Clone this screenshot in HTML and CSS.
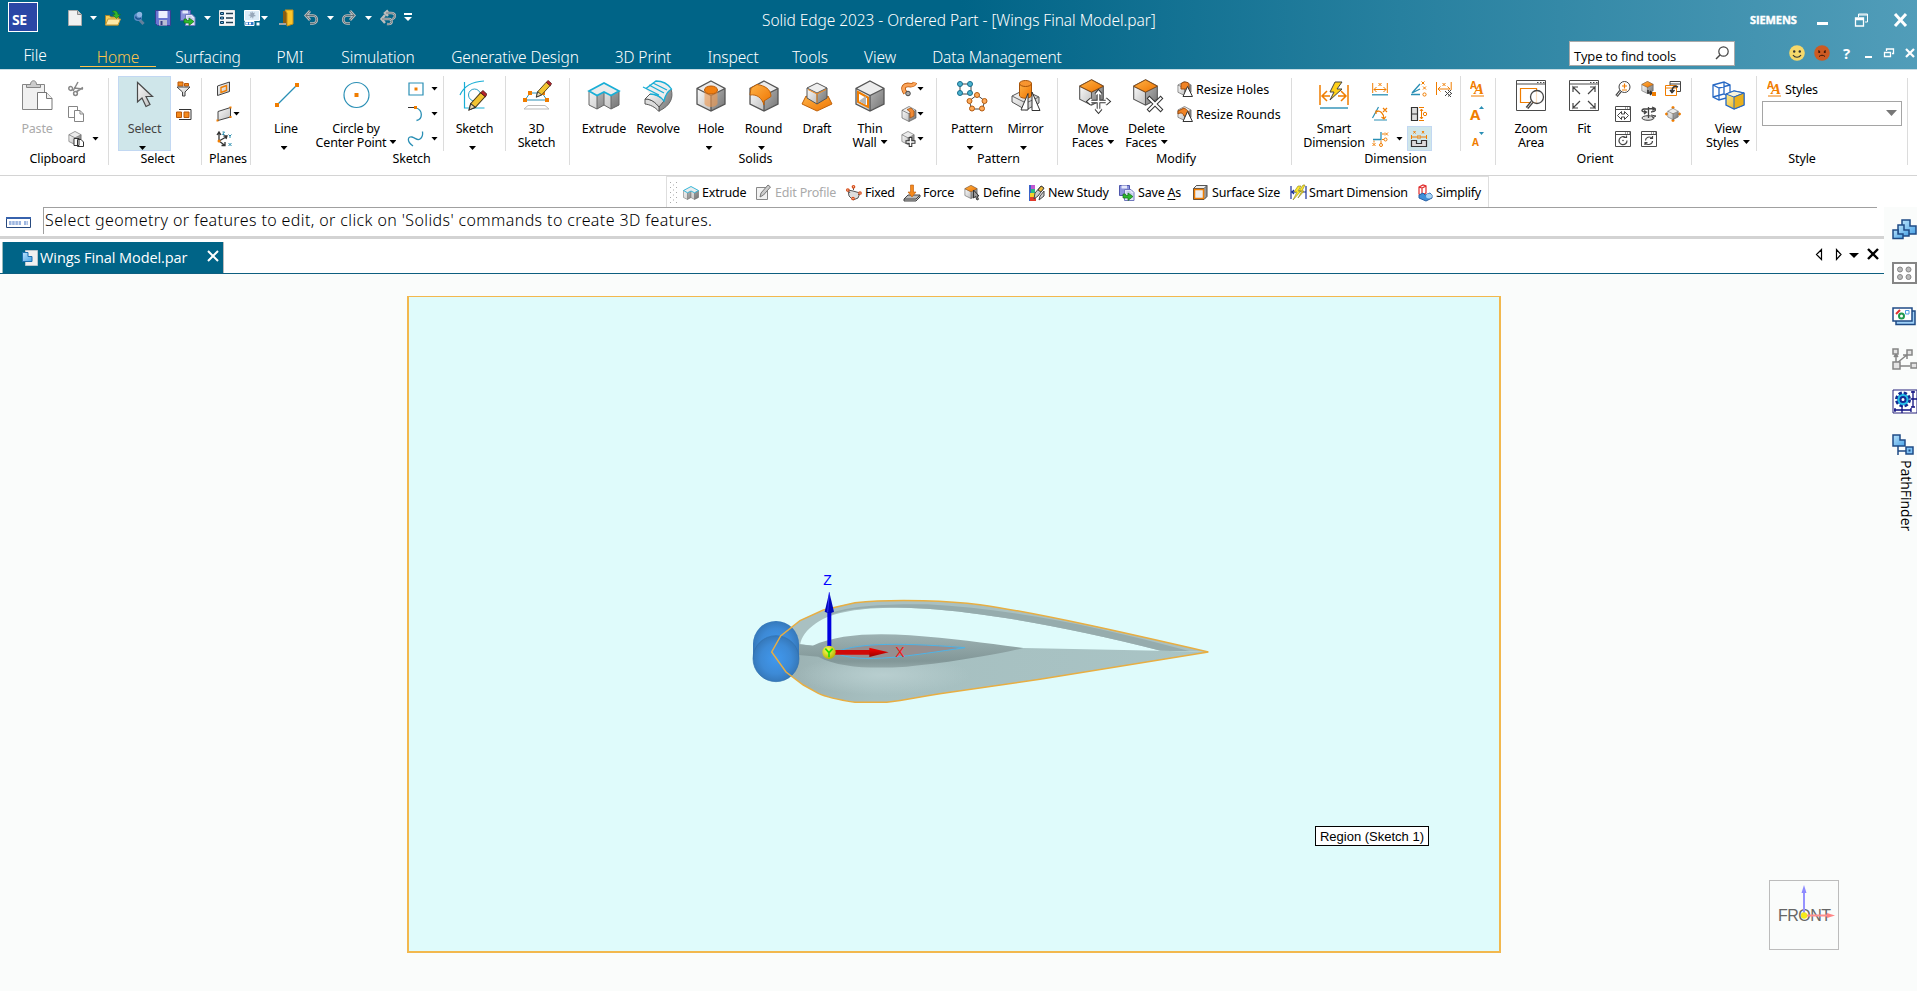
FILE: index.html
```html
<!DOCTYPE html>
<html lang="en">
<head>
<meta charset="utf-8">
<title>Solid Edge 2023 - Ordered Part - [Wings Final Model.par]</title>
<link rel="stylesheet" href="styles.css">
</head>
<body>
<svg class="defs" width="0" height="0">
  <defs>
    <linearGradient id="gOr" x1="0" y1="0" x2="1" y2="1"><stop offset="0" stop-color="#ffb347"/><stop offset="1" stop-color="#ee7300"/></linearGradient>
    <linearGradient id="gGr" x1="0" y1="0" x2="1" y2="1"><stop offset="0" stop-color="#fafafa"/><stop offset="1" stop-color="#c0c0c0"/></linearGradient>
    <linearGradient id="gDk" x1="0" y1="0" x2="1" y2="1"><stop offset="0" stop-color="#b4b4b4"/><stop offset="1" stop-color="#747474"/></linearGradient>
    <linearGradient id="gBl" x1="0" y1="0" x2="1" y2="1"><stop offset="0" stop-color="#b9e2fb"/><stop offset="1" stop-color="#4aa3e6"/></linearGradient>
    <linearGradient id="gYe" x1="0" y1="0" x2="1" y2="1"><stop offset="0" stop-color="#fff2a0"/><stop offset="1" stop-color="#e9a400"/></linearGradient>
    <symbol id="cube" viewBox="0 0 32 32">
      <path d="M2 8.500 16 15.500V31L2 24z" fill="url(#gGr)"/><path d="M30 8.500 16 15.500V31L30 24z" fill="url(#gDk)"/><path d="M16 1 30 8.500 16 15.500 2 8.500z" fill="#ececec"/>
      <path d="M16 1 30 8.500V24L16 31 2 24V8.500zM2 8.500 16 15.500 30 8.500M16 15.500V31" fill="none" stroke="#555" stroke-width="1.300"/>
    </symbol>
    <symbol id="cubeOr" viewBox="0 0 32 32">
      <use href="#cube"/><path d="M16 1 30 8.500 16 15.500 2 8.500z" fill="url(#gOr)" stroke="#8a4a10"/>
    </symbol>
    <symbol id="extrude" viewBox="0 0 32 32">
      <path d="M1 11 16 3l15 8v14l-8 4-7-4-7 4-8-4z" fill="url(#gGr)"/><path d="M9 15.500 16 12v13l-7 4zM23 15.500 31 11v14l-8 4z" fill="url(#gDk)"/>
      <path d="M1 11v14l8 4V15.500M31 11v14l-8 4V15.500M9 29l7-4 7 4M16 12v13" fill="none" stroke="#666"/>
      <path d="M1 11 16 3l15 8-8 4.500L16 12l-7 3.500z" fill="#ececec" stroke="#18aed6" stroke-width="1.700"/>
    </symbol>
    <symbol id="pencil" viewBox="0 0 18 20">
      <path d="m1 19 1.500-6L12 2.500l4.500 3.500L7 16.500z" fill="#f2c431" stroke="#4a3a18"/><path d="m1 19 1.500-6L7 16.500z" fill="#e8d8b0" stroke="#333"/><path d="m12 2.500 2.200-2L18 4l-1.500 2.500z" fill="#b8252c" stroke="#4a1515" stroke-width=".8"/>
    </symbol>
    <symbol id="win" viewBox="0 0 16 16"><path d="M.5.500h15v15H.5zM.5 3.500h15" fill="#fff" stroke="#4a4a4a"/><path d="M10 2h1M12 2h1M14 2h1" stroke="#4a4a4a"/></symbol>
    <symbol id="copies" viewBox="0 0 16 16">
      <path d="M.5.500h10v10H.5z" fill="#8b93dc" stroke="#4f57ad"/><path d="M2.500.500h5.500v3H2.500z" fill="#e6e9fb"/><path d="M5.500 4.500H12l3 3v8H5.500z" fill="#e4e8fb" stroke="#7178bd"/><path d="M7.500 7h4M7.500 9h6" stroke="#a5abd8"/>
      <path d="M4 9v4h5v2.500l5-4L9 8v2.500H6.500V9z" fill="#2db82d" stroke="#117017" stroke-width=".7"/>
    </symbol>
    <symbol id="aa" viewBox="0 0 15 16"><text x="0" y="8" class="ico-a">A</text><text x="4" y="13" class="ico-b">A</text><path d="M1 15h13" stroke="#f07d00"/></symbol>
  </defs>
</svg>

<header class="titlebar">
  <div class="title-row">
    <div class="logo">SE</div>
    <div class="quick">
      <svg class="q q-new" width="14" height="16" viewBox="0 0 14 16"><path d="M.5.500h9l4 4v11H.5z" fill="#f1f1f1" stroke="#aaa"/><path d="M9.500.500v4h4" fill="#ccc" stroke="#888"/></svg>
      <i class="caret light c-new"></i>
      <svg class="q q-open" width="16" height="16" viewBox="0 0 16 16"><path d="M.5 15V5.500h4l1 1.500h8v8z" fill="#f8cf5a" stroke="#a8842b"/><path d="m.5 15 2.500-6h12.500l-2.500 6z" fill="#ffe9a6" stroke="#c79a35"/><path d="M7 1.500c3-2 6 0 6 3h2.500L11.500 8.500 7.500 4.500H10c0-1.500-1-2.500-3-3z" fill="#35b32b" stroke="#147512" stroke-width=".5"/></svg>
      <svg class="q q-key" width="12" height="14" viewBox="0 0 12 14"><path d="m5 7 5.500 6" stroke="#63809c" stroke-width="3"/><circle cx="5" cy="6" r="4" fill="#5b8dc8"/><circle cx="6.500" cy="3.500" r="2.700" fill="#8db6e2"/><path d="M2.500 5.500C3 8 6 9 8 7" fill="none" stroke="#1c5590" stroke-width="1.500"/></svg>
      <svg class="q q-save" width="16" height="16" viewBox="0 0 16 16"><path d="M.5.500h15v15h-13l-2-2z" fill="#6a75d2" stroke="#373f92"/><path d="M3.500 1h9v7h-9z" fill="#edf0ff"/><path d="M4 10h8v5.500H4z" fill="#b9bdd5"/><path d="M5.500 11h2v4h-2z" fill="#353c83"/></svg>
      <svg class="q q-saveas" width="16" height="16"><use href="#copies"/></svg>
      <i class="caret light c-saveas"></i>
      <svg class="q q-list" width="16" height="16" viewBox="0 0 16 16"><path d="M.5.500h15v15H.5z" fill="#f4f7fa" stroke="#e7e7e7"/><path d="M1.500 2.500h3v2h-3zM1.500 7h3v2h-3zM1.500 11.500h3v2h-3z" fill="#6ab1df" stroke="#0a3a5c"/><path d="M7 3.500h7M7 8h7M7 12.500h7" stroke="#223f52" stroke-width="1.300"/></svg>
      <svg class="q q-style" width="16" height="16" viewBox="0 0 16 16"><path d="M.5.500h15v10H.5z" fill="#dcebf7" stroke="#fff"/><path d="m8 1 1 2 2-.5-1 2 2 1.500-2.500.5L9 9 8 7 6 8l.5-2L4 5l2.500-.5L6 2l1.500 1z" fill="#98a8ba"/><path d="M1 11.500h9v4H1z" fill="#3077c8" stroke="#fff"/><path d="M2 13.500h2M5 13.500h2" stroke="#fff" stroke-width="2"/><path d="M12.500 12.500h3v3h-3z" fill="#fff"/></svg>
      <i class="caret light c-style"></i>
      <svg class="q q-door" width="15" height="16" viewBox="0 0 15 16"><path d="M4 1h9v13H4z" fill="#8b5c10"/><path d="M6 0h8v14l-6 2V3z" fill="#fcc52a" stroke="#c89018"/><path d="M0 14h7" stroke="#a4a4a4" stroke-width="2"/></svg>
      <svg class="q q-undo" width="15" height="16" viewBox="0 0 15 16"><path d="M2 5.500h7c5 0 5 8 0 8H6M6 1 1.800 5.500 6 10" fill="none" stroke="#bdbdbd" stroke-width="2.700"/><path d="M2 5.500h7c5 0 5 8 0 8H6M6 1 1.800 5.500 6 10" fill="none" stroke="#4b5f68" stroke-width=".8"/></svg>
      <i class="caret light c-undo"></i>
      <svg class="q q-redo" width="15" height="16" viewBox="0 0 15 16"><path d="M13 5.500H6c-5 0-5 8 0 8h3M9 1l4.200 4.500L9 10" fill="none" stroke="#bdbdbd" stroke-width="2.700"/><path d="M13 5.500H6c-5 0-5 8 0 8h3M9 1l4.200 4.500L9 10" fill="none" stroke="#4b5f68" stroke-width=".8"/></svg>
      <i class="caret light c-redo"></i>
      <svg class="q q-multi" width="16" height="16" viewBox="0 0 16 16"><path d="M6 3h5c6 0 4 6 1 6M8 .5 5 3l3 3M2 9h7c4 0 4 6-2 5M5 5 1.500 9 5 13" fill="none" stroke="#bdbdbd" stroke-width="2.400"/><path d="M6 3h5c6 0 4 6 1 6M2 9h7c4 0 4 6-2 5" fill="none" stroke="#4b5f68" stroke-width=".7"/></svg>
      <div class="overflow"><i class="caret light wide"></i></div>
    </div>
    <div class="title">Solid Edge 2023 - Ordered Part - [Wings Final Model.par]</div>
    <div class="brand">SIEMENS</div>
    <svg class="sys s-min" width="12" height="14" viewBox="0 0 12 14"><path d="M0 10.500h11" stroke="#fff" stroke-width="3"/></svg>
    <svg class="sys s-res" width="13" height="14" viewBox="0 0 13 14"><path d="M3.500 4V1h9v8H10M3.500 2h9" fill="none" stroke="#fff"/><path d="M.5 5h8v8h-8zM.5 6.500h8" fill="none" stroke="#fff" stroke-width="1.300"/></svg>
    <svg class="sys s-x" width="13" height="14" viewBox="0 0 13 14"><path d="m1 1 11 12M12 1 1 13" stroke="#fff" stroke-width="3"/></svg>
  </div>
  <nav class="tab-row">
    <span class="tab t-file">File</span><span class="tab t-home">Home</span><span class="tab t-surf">Surfacing</span><span class="tab t-pmi">PMI</span><span class="tab t-sim">Simulation</span><span class="tab t-gen">Generative Design</span><span class="tab t-3d">3D Print</span><span class="tab t-insp">Inspect</span><span class="tab t-tools">Tools</span><span class="tab t-view">View</span><span class="tab t-data">Data Management</span>
    <div class="search"><span>Type to find tools</span><svg width="14" height="14" viewBox="0 0 14 14"><circle cx="8.500" cy="5.500" r="4.700" fill="none" stroke="#444" stroke-width="1.200"/><path d="m5 9-4 4" stroke="#444" stroke-width="1.400"/></svg></div>
    <svg class="face f1" width="16" height="16" viewBox="0 0 16 16"><circle cx="8" cy="8" r="7.800" fill="#f6d86a"/><circle cx="5.200" cy="6.500" r="1.200" fill="#333"/><circle cx="10.800" cy="6.500" r="1.200" fill="#333"/><path d="M4 10c2 3 6 3 8 0" fill="none" stroke="#333" stroke-width="1.200"/></svg>
    <svg class="face f2" width="16" height="16" viewBox="0 0 16 16"><circle cx="8" cy="8" r="7.800" fill="#cc5a22"/><path d="m4 5.500 2 .7M12 5.500l-2 .7" stroke="#3a1506" stroke-width=".7"/><circle cx="5.200" cy="7" r="1.100" fill="#3a1506"/><circle cx="10.800" cy="7" r="1.100" fill="#3a1506"/><path d="M5 11.500c2-1.700 4-1.700 6 0" fill="none" stroke="#3a1506"/></svg>
    <b class="help">?</b>
    <svg class="mini m1" width="8" height="10" viewBox="0 0 8 10"><path d="M0 9h7" stroke="#fff" stroke-width="2"/></svg>
    <svg class="mini m2" width="10" height="10" viewBox="0 0 10 10"><path d="M2.500 3V1h7v4.500H8M.5 4.500h6v4h-6z" fill="none" stroke="#fff" stroke-width="1.300"/></svg>
    <svg class="mini m3" width="10" height="10" viewBox="0 0 10 10"><path d="m1 1 8 8M9 1 1 9" stroke="#fff" stroke-width="2.200"/></svg>
  </nav>
</header>

<section class="ribbon">
  <div class="group g-clip">
    <div class="items">
      <div class="big b-paste disabled">
        <svg width="32" height="32" viewBox="0 0 32 32"><path d="M1.500 4.500h22v25h-22z" fill="#f0f0f0" stroke="#858585"/><path d="M5.500 7.500v-3h4c0-5 6-5 6 0h4v3z" fill="#ccc" stroke="#858585"/><path d="M16.500 12.500h9l5.500 6v11H16.500z" fill="#fff" stroke="#777"/><path d="M25.500 12.500v6H31" fill="#eee" stroke="#777"/></svg>
        <span>Paste</span>
      </div>
      <div class="col">
        <div class="row"><svg width="16" height="16" viewBox="0 0 16 16"><path d="M5 10 10 1M8 11 15 6.500M15 8 6 7" stroke="#888" stroke-width="1.500"/><circle cx="2.700" cy="7.500" r="1.900" fill="none" stroke="#888" stroke-width="1.500"/><circle cx="7.500" cy="12.500" r="1.900" fill="none" stroke="#888" stroke-width="1.500"/></svg></div>
        <div class="row"><svg width="16" height="16" viewBox="0 0 16 16"><path d="M.5.500h9v11h-9z" fill="#fff" stroke="#858585"/><path d="M6.500 4.500H12l3.500 3.500v7.500h-9z" fill="#fff" stroke="#858585"/><path d="M12 4.500V8h3.500" fill="none" stroke="#858585"/></svg></div>
        <div class="row"><svg width="16" height="16" viewBox="0 0 16 16"><use href="#cube" width="14" height="14"/><path d="M6 7.500h5v7H6zM9.500 8.500H13l2.500 2.500v4.500h-6z" fill="#fff" stroke="#333"/></svg><i class="caret gap8"></i></div>
      </div>
    </div>
    <div class="glabel l-clip">Clipboard</div>
  </div>

  <div class="group g-select">
    <div class="items">
      <div class="big b-select active">
        <svg width="32" height="32" viewBox="0 0 32 32"><path d="M8.500 2.500v19.500l4.500-4 4 8.500 4-2-4-8h6.500z" fill="url(#gGr)" stroke="#4a4a4a" stroke-width="1.200"/></svg>
        <span>Select</span><i class="caret under"></i>
      </div>
      <div class="col c-select">
        <div class="row"><svg width="16" height="16" viewBox="0 0 16 16"><path d="M2 1h5v4H2zM8.500 2.500h4V5h-4z" fill="#f28a1c" stroke="#b9570a"/><path d="M1 6h13L9 11v4H6.500v-4z" fill="url(#gGr)" stroke="#444"/></svg></div>
        <div class="row"><svg width="16" height="16" viewBox="0 0 16 16"><path d="M3 3.500h12v10H3" fill="#fff" stroke="#333"/><path d="M.5 6h5v5.500h-5zM8 6h5v5.500H8z" fill="#f58a1c" stroke="#b9570a"/></svg></div>
      </div>
    </div>
    <div class="glabel l-select">Select</div>
  </div>

  <div class="group g-planes">
    <div class="items">
      <div class="col c-planes">
        <div class="row"><svg width="16" height="16" viewBox="0 0 16 16"><path d="M1.500 5 13.500 1v9.500L1.500 14.500z" fill="url(#gGr)" stroke="#444"/><path d="M5 6.500 10.500 4.500v5L5 11.500z" fill="none" stroke="#f07d00" stroke-width="1.400"/></svg></div>
        <div class="row"><svg width="16" height="16" viewBox="0 0 16 16"><path d="M2 5.500 14.500 1.500v9.500L2 14.500z" fill="url(#gGr)" stroke="#444"/><path d="M13.500.500h2v2h-2zM13.500 10h2v2h-2zM.5 13.500h2v2h-2z" fill="#f07d00"/></svg><i class="caret gap1"></i></div>
        <div class="row"><svg width="16" height="16" viewBox="0 0 16 16"><path d="M3 10V1.500M1 4l2-3 2 3M3 10l8-4.500M7.500 5H11l-1 3M3 10l6 4.500M9 11v3.500H5.500" fill="none" stroke="#333" stroke-width="1.300"/><circle cx="3" cy="10" r="1.500" fill="#f07d00"/><path d="M6.500 1h2l-2 2.500h2M12.500 3.500 14 5l1.500-1.500M14 5v2M12.500 12l3 3M15.500 12l-3 3" fill="none" stroke="#258bad"/></svg></div>
      </div>
    </div>
    <div class="glabel l-planes">Planes</div>
  </div>

  <div class="group g-sketch">
    <div class="items">
      <div class="big b-line"><svg width="32" height="32" viewBox="0 0 32 32"><path d="M7 25 27 5" stroke="#2a8fb5" stroke-width="1.300"/><path d="M5 23h4v4H5zM25 3h4v4h-4z" fill="#f07d00"/></svg><span>Line</span><i class="caret under"></i></div>
      <div class="big b-circle"><svg width="32" height="32" viewBox="0 0 32 32"><circle cx="16.500" cy="15" r="12.500" fill="none" stroke="#2a8fb5" stroke-width="1.200"/><path d="M14.500 13h4v4h-4z" fill="#f07d00"/></svg><span>Circle by<br>Center Point<i class="caret in"></i></span></div>
      <div class="col c-shapes">
        <div class="row"><svg width="16" height="16" viewBox="0 0 16 16"><path d="M1 2h14v12H1z" fill="none" stroke="#2a8fb5" stroke-width="1.200"/><path d="M6.500 6.500h3v3h-3z" fill="#f07d00"/></svg><i class="caret gap7"></i></div>
        <div class="row"><svg width="16" height="16" viewBox="0 0 16 16"><path d="M0 1.500h7" stroke="#333"/><path d="M8 2c7 2 7 11 .5 12.500" fill="none" stroke="#2a8fb5" stroke-width="1.300"/><path d="M6 0h3v3H6z" fill="#f07d00"/></svg><i class="caret gap7"></i></div>
        <div class="row"><svg width="16" height="16" viewBox="0 0 16 16"><path d="M5 15C-2 10 0 5 4 6s5 4 8 2 3-4 2.500-7.500" fill="none" stroke="#2a8fb5" stroke-width="1.300"/></svg><i class="caret gap7"></i></div>
      </div>
      <div class="vsep"></div>
      <div class="big b-sk"><svg width="32" height="32" viewBox="0 0 32 32"><path d="M5.500 2v26h20M1 15C5 6 14 1.500 25 1" fill="none" stroke="#18aed6" stroke-width="1.200"/><circle cx="15.500" cy="15" r="6" fill="none" stroke="#2a9fc5"/><use href="#pencil" x="9" y="10" width="19" height="21"/></svg><span>Sketch</span><i class="caret under"></i></div>
      <div class="vsep"></div>
      <div class="big b-3d"><svg width="32" height="32" viewBox="0 0 32 32"><path d="M4 20 9 13h12l5 7z" fill="none" stroke="#2a8fb5"/><path d="M7 25.500h17l4 3.500H3z" fill="#fff" stroke="#bbb"/><path d="M2 18h4v4H2zM24 18h4v4h-4zM7 11h4v4H7zM20 11h4v4h-4z" fill="#f07d00"/><use href="#pencil" x="14" y="0" width="17" height="18"/></svg><span>3D<br>Sketch</span></div>
    </div>
    <div class="glabel l-sketch">Sketch</div>
  </div>

  <div class="group g-solids">
    <div class="items">
      <div class="big b-ext"><svg width="34" height="32"><use href="#extrude" width="34" height="32"/></svg><span>Extrude</span></div>
      <div class="big b-rev"><svg width="32" height="32" viewBox="0 0 32 32"><path d="M29 9c3 9-1 17-12 22v-4l4-12z" fill="url(#gDk)" stroke="#666"/><path d="M3 19c6 0 10 3 14 8v4.500C13 27 8 24.500 3 24z" fill="#ddd" stroke="#555"/><path d="M3 19 8 14c6 0 11 3 14 7l-5 6c-4-5-8-8-14-8z" fill="url(#gGr)" stroke="#555"/><path d="M8 14 3.500 8.500 14 1c6 0 12 3 15.500 8-5 3-6.500 7-7.500 12-3-4-8-7-14-7z" fill="#eee"/><path d="M4 8.500 14 1c6 0 12 3 15.500 8-5 3-6.500 7-7.500 12-3-4-8-7-14-7M1 7l16 8M7 5l15 8M11 3l14 7" fill="none" stroke="#18aed6" stroke-width="1.300"/></svg><span>Revolve</span></div>
      <div class="big b-hole"><svg width="32" height="32"><use href="#cube" width="32" height="32"/><path d="M9.500 10v14c2 4 11 4 13 0V10z" fill="#f29a4e" opacity=".6"/><ellipse cx="16" cy="10" rx="6.500" ry="4" fill="#f28011" stroke="#bb5a08"/></svg><span>Hole</span><i class="caret under"></i></div>
      <div class="big b-round"><svg width="32" height="32"><use href="#cube" width="32" height="32"/><path d="m2 15 1-7 6-3.500c8 1 14 5 14 12L16 21v4C14 18 9 14 2 15z" fill="url(#gOr)" stroke="#c0620a"/></svg><span>Round</span><i class="caret under"></i></div>
      <div class="big b-draft"><svg width="32" height="32" viewBox="0 0 32 32"><path d="m5 16-4 8 15 7 15-7-4-8-11 7z" fill="url(#gOr)" stroke="#c0620a"/><path d="m6 8 10 5v11L6 18z" fill="url(#gGr)"/><path d="m26 8-10 5v11l10-6z" fill="url(#gDk)"/><path d="m16 3 10 5-10 5L6 8z" fill="#eee"/><path d="m16 3 10 5v10l-10 6-10-6V8zM6 8l10 5 10-5M16 13v11" fill="none" stroke="#555"/><path d="M7 9.500 16 14l9-4.500M16 14v9" fill="none" stroke="#f28a1c"/></svg><span>Draft</span></div>
      <div class="big b-thin"><svg width="32" height="32"><use href="#cube" width="32" height="32"/><path d="m4 12 10 5.500V27L4 22z" fill="#fff" stroke="#f07d00" stroke-width="2"/><path d="m5 21 7-5v9z" fill="#b5b5b5"/></svg><span>Thin<br>Wall <i class="caret in"></i></span></div>
      <div class="col c-solids">
        <div class="row"><svg width="16" height="16" viewBox="0 0 16 16"><path d="M4.500 12C0 6 4 3.500 8 4s5 0 6-2.500" fill="none" stroke="#b9570a" stroke-width="4.600"/><path d="M4.500 12C0 6 4 3.500 8 4s5 0 6-2.500" fill="none" stroke="#fba45a" stroke-width="3"/><circle cx="7" cy="12.500" r="2.300" fill="#aaa" stroke="#444"/></svg><i class="caret"></i></div>
        <div class="row"><svg width="16" height="16"><use href="#cube" width="16" height="16"/><path d="M6 3.500 10 2l3 3v5l-4 2V6z" fill="#f08a35" stroke="#9a4c10" stroke-width=".7"/></svg><i class="caret"></i></div>
        <div class="row"><svg width="16" height="16"><use href="#cube" width="14" height="14"/><path d="M9.500 6v10M4.500 11h10" stroke="#333" stroke-width="3.600"/><path d="M9.500 7v8M5.500 11h8" stroke="#fff" stroke-width="1.500"/></svg><i class="caret"></i></div>
      </div>
    </div>
    <div class="glabel l-solids">Solids</div>
  </div>

  <div class="group g-pattern">
    <div class="items">
      <div class="big b-pat"><svg width="32" height="32" viewBox="0 0 32 32"><path d="M4 4h11v10H4z" fill="none" stroke="#444"/><path d="m21 15 8 6-3 8H16l-3-8z" fill="none" stroke="#444"/><g fill="#4bb3d0" stroke="#176c8b"><circle cx="4" cy="4" r="2.500"/><circle cx="14" cy="4" r="2.500"/><circle cx="4" cy="13" r="2.500"/><circle cx="14" cy="13" r="2.500"/></g><g fill="#ffab5a" stroke="#b35a10"><circle cx="21" cy="15" r="2.500"/><circle cx="28.500" cy="21" r="2.500"/><circle cx="26" cy="28.500" r="2.500"/><circle cx="16" cy="28.500" r="2.500"/><circle cx="13.500" cy="21" r="2.500"/></g></svg><span>Pattern</span><i class="caret under"></i></div>
      <div class="big b-mir"><svg width="32" height="32" viewBox="0 0 32 32"><path d="m2 16 12-6 15 7v6l-13 7-14-8z" fill="url(#gGr)" stroke="#555"/><path d="m2 16 14 7 13-6" fill="none" stroke="#666"/><path d="M9.500 3v13c2 3 10 3 12 0V3z" fill="url(#gOr)" stroke="#a65309"/><ellipse cx="15.500" cy="3.500" rx="6" ry="3" fill="#f79530" stroke="#a65309"/><path d="M18 13.500V30h-7zM22 12v18.500h8z" fill="#fff" stroke="#333"/></svg><span>Mirror</span><i class="caret under"></i></div>
    </div>
    <div class="glabel l-pattern">Pattern</div>
  </div>

  <div class="group g-modify">
    <div class="items">
      <div class="big b-move"><svg width="34" height="32"><use href="#cubeOr" x="1" y="-1" width="29" height="27"/><path d="M22.500 12v19M13 21.500h19M20 14.500l2.500-3 2.500 3M20 28.500l2.500 3 2.500-3M15.500 19l-3 2.500 3 2.500M29.500 19l3 2.500-3 2.500" fill="none" stroke="#333" stroke-width="3.600"/><path d="M22.500 12v19M13 21.500h19M20 14.500l2.500-3 2.500 3M20 28.500l2.500 3 2.500-3M15.500 19l-3 2.500 3 2.500M29.500 19l3 2.500-3 2.500" fill="none" stroke="#fff" stroke-width="1.700"/></svg><span>Move<br>Faces <i class="caret in"></i></span></div>
      <div class="big b-del"><svg width="34" height="32"><use href="#cubeOr" x="1" y="-1" width="29" height="27"/><path d="m18 17 14 14M32 17 18 31" stroke="#333" stroke-width="4"/><path d="m18.700 17.700 12.600 12.600M31.300 17.700 18.700 30.300" stroke="#fff" stroke-width="2"/></svg><span>Delete<br>Faces <i class="caret in"></i></span></div>
      <div class="col c-modify">
        <div class="row"><svg width="16" height="16"><use href="#cube" width="15" height="15"/><path d="M4 3c2-3 8-2 8 0v5H4z" fill="#f08325" stroke="#9a4c10"/><path d="M10.500 5.500 6 15.500h9.500z" fill="#fff" stroke="#333"/></svg><span>Resize Holes</span></div>
        <div class="row"><svg width="16" height="16"><use href="#cube" width="15" height="15"/><path d="m1 5 6-3c4 2 6 5 5 9l-5-1C6 7 4 6 1 8z" fill="#f08325" stroke="#9a4c10"/><path d="M10.500 5.500 6 15.500h9.500z" fill="#fff" stroke="#333"/></svg><span>Resize Rounds</span></div>
      </div>
    </div>
    <div class="glabel l-modify">Modify</div>
  </div>

  <div class="group g-dim">
    <div class="items">
      <div class="big b-smart"><svg width="32" height="32" viewBox="0 0 32 32"><path d="M2 5v20M30 5v20M4 16h8M20 16h8M9 11l-5 5 5 5M23 11l5 5-5 5" fill="none" stroke="#f07d00" stroke-width="1.500"/><path d="M2 28h28" stroke="#2a8fb5" stroke-width="1.400"/><path d="m17 2-5 10h4l-4 8 12-11h-5l5-7z" fill="#ffd11a" stroke="#444"/></svg><span>Smart<br>Dimension</span></div>
      <div class="col c-d1">
        <div class="row"><svg width="16" height="16" viewBox="0 0 16 16"><path d="M.7 2v10M15.300 2v10M2 8.500h12M4.500 6 2 8.500 4.500 11M11.500 6 14 8.500 11.500 11M6.500 2l3 3M9.500 2l-3 3" fill="none" stroke="#f07d00"/><path d="M0 13.800h16" stroke="#2a8fb5" stroke-width="1.300"/></svg></div>
        <div class="row"><svg width="16" height="16" viewBox="0 0 16 16"><path d="m.5 12 6-11M2 14h13" fill="none" stroke="#2a8fb5" stroke-width="1.200"/><path d="M4 6c4-3 8 2 8 7M9.500 11l2.500 2 2-2.500M4 8V5h3M11 2l4 4M15 2l-4 4" fill="none" stroke="#f07d00" stroke-width="1.200"/></svg></div>
        <div class="row"><svg width="16" height="16" viewBox="0 0 16 16"><path d="M1 8.500h8V1" fill="none" stroke="#2a8fb5" stroke-width="1.300"/><path d="M10 3h3M10 8.500h2M13 1.500l3 3M16 1.500l-3 3M.5 12l3 3M3.500 12l-3 3M2 9.500v2M9 9.500v3" fill="none" stroke="#f07d00"/><circle cx="13.500" cy="8.500" r="1.500" fill="none" stroke="#f07d00"/><circle cx="9" cy="14" r="1.500" fill="none" stroke="#f07d00"/></svg><i class="caret gap8"></i></div>
      </div>
      <div class="col c-d2">
        <div class="row"><svg width="16" height="16" viewBox="0 0 16 16"><path d="M1 12 9 3M1 12l8-4M0 13.500h9" fill="none" stroke="#2a8fb5" stroke-width="1.300"/><path d="m10.500.5 3 3M13.500.5l-3 3M12 5.500l3 3M15 5.500l-3 3" stroke="#f07d00"/><circle cx="13.500" cy="13.500" r="1.600" fill="none" stroke="#f07d00"/></svg></div>
        <div class="row"><svg width="16" height="16" viewBox="0 0 16 16"><path d="M.5 1.500h6v13h-6zM.5 8h6" fill="#ddd" stroke="#333" stroke-width="1.200"/><path d="M8 1.500h5M8 14.500h5M10.500 3v10M9 5l1.500-2L12 5M9 11l1.500 2 1.500-2" fill="none" stroke="#f07d00"/><circle cx="14" cy="8" r="1.700" fill="none" stroke="#f07d00"/></svg></div>
        <div class="row hl"><svg width="16" height="16" viewBox="0 0 16 16"><path d="M.5 4v4M7 4v4M9 4v4M15.500 4v4M.5 6H7M9 6h6.500M2.500 0l2 2.500M4.500 0l-2 2.500M11 0l2 2.500M13 0l-2 2.500" stroke="#f07d00" fill="none"/><path d="M.5 9.500h5v3h5v-3h5v6H.5z" fill="#ddd" stroke="#333" stroke-width="1.200"/></svg></div>
      </div>
      <div class="col c-d3">
        <div class="row"><svg width="16" height="16" viewBox="0 0 16 16"><path d="M.5 1v13M15.200 1v8M2 8h12M4.500 5.500 2 8l2.500 2.500M11.500 5.500 14 8M6.500 2l3 3M9.500 2l-3 3" fill="none" stroke="#f07d00"/><path d="m9 10 6 6M12 9l4 4M15 9l-6 6M12 15.500l4-3.500" stroke="#444"/></svg></div>
      </div>
      <div class="vsep"></div>
      <div class="col c-d4">
        <div class="row"><svg width="15" height="16"><use href="#aa"/></svg></div>
        <div class="row"><svg width="15" height="16" viewBox="0 0 15 16"><text x="0" y="14" class="ico-c">A</text><path d="m9 3 2.500-3L14 3z" fill="#2a8fb5"/></svg></div>
        <div class="row"><svg width="15" height="16" viewBox="0 0 15 16"><text x="2" y="15" class="ico-d">A</text><path d="m9 1 2.500 3L14 1z" fill="#2a8fb5"/></svg></div>
      </div>
    </div>
    <div class="glabel l-dim">Dimension</div>
  </div>

  <div class="group g-orient">
    <div class="items">
      <div class="big b-zoom"><svg width="32" height="32" viewBox="0 0 32 32"><path d="M1.500.500h29v30h-29zM1.500 4h29" fill="#fff" stroke="#4a4a4a"/><path d="M22 2.500h1.500M25 2.500h1.500M28 2.500h1.500" stroke="#4a4a4a"/><path d="M5.500 8.500h16v14h-16z" fill="none" stroke="#f07d00" stroke-width="1.200"/><circle cx="22" cy="17" r="6.500" fill="#fff" fill-opacity=".75" stroke="#444" stroke-width="1.300"/><path d="m17 22-5 6" stroke="#444" stroke-width="3.500"/><path d="m17 22-4.500 5.500" stroke="#ddd"/></svg><span>Zoom<br>Area</span></div>
      <div class="big b-fit"><svg width="32" height="32" viewBox="0 0 32 32"><path d="M1.500.500h29v30h-29zM1.500 4h29" fill="#fff" stroke="#4a4a4a"/><path d="M22 2.500h1.500M25 2.500h1.500M28 2.500h1.500" stroke="#4a4a4a"/><path d="m12 14-7-7v5M5 7h5M20 14l7-7v5M27 7h-5M12 21l-7 7v-5M5 28h5M20 21l7 7v-5M27 28h-5" fill="none" stroke="#444" stroke-width="1.200"/></svg><span>Fit</span></div>
      <div class="col c-o1">
        <div class="row"><svg width="16" height="16" viewBox="0 0 16 16"><circle cx="9.500" cy="6" r="5.500" fill="#fff" stroke="#444"/><path d="m5.500 10-4 5" stroke="#444" stroke-width="3"/><path d="m5.500 10-3.500 4.500" stroke="#eee"/><path d="M7 5h5M9.500 2.500v5M7 9h5" stroke="#f07d00" stroke-width="1.200"/></svg></div>
        <div class="row"><svg width="16" height="16" viewBox="0 0 16 16"><use href="#win"/><path d="M6.500 5.500 2.500 9.500l4 4V11h3v2.500l4-4-4-4V8h-3z" fill="none" stroke="#444"/></svg></div>
        <div class="row"><svg width="16" height="16" viewBox="0 0 16 16"><use href="#win"/><path d="M10.500 6.500a4 4 0 1 0 1.500 3M8.500 6.500h3V4.500" fill="none" stroke="#444" stroke-width="1.200"/><circle cx="8" cy="9.500" r=".8" fill="#444"/></svg></div>
      </div>
      <div class="col c-o2">
        <div class="row"><svg width="16" height="16"><use href="#cubeOr" width="13" height="13"/><path d="M7 9v3h4M9 10l2 2-2 2" fill="none" stroke="#333" stroke-width="1.500"/><path d="M11 11h4v4h-4z" fill="#f07d00"/></svg></div>
        <div class="row"><svg width="16" height="16" viewBox="0 0 16 16"><ellipse cx="7" cy="12" rx="6" ry="2.300" fill="#ddd" stroke="#444"/><path d="M7.500 1v11M5 6C0 6 0 3.500 3 3l9-.5c4 .5 3 3-2 3.500M3 4.500 5.500 6 3 8M11 1l3 1.500-2.500 2" fill="none" stroke="#444" stroke-width="1.300"/><path d="m10 9 5 1-4 2" fill="none" stroke="#444"/></svg></div>
        <div class="row"><svg width="16" height="16" viewBox="0 0 16 16"><use href="#win"/><path d="M11.500 7.500c-3-3-7-1-7 2M4 12c3 3 7.500 1 7.500-2M11.500 5v2.500H9M4 14v-2.500h2.500" fill="none" stroke="#444" stroke-width="1.200"/></svg></div>
      </div>
      <div class="col c-o3">
        <div class="row"><svg width="16" height="16" viewBox="0 0 16 16"><path d="M5 .5h10.500v10H5zM5 3h10" fill="#fff" stroke="#444"/><path d="M.5 4.500h11v10H.5zM.5 7h11" fill="#fff" stroke="#f07d00"/><path d="M13 6c-4-2-6 1-6 4M5 9l2 2.500L9.500 9" fill="none" stroke="#333" stroke-width="1.600"/></svg></div>
        <div class="row"><svg width="16" height="16" viewBox="0 0 16 16"><path d="M8 0v16M0 8h16M6.500 1.500h3M6.500 14.500h3M1.500 6.500v3M14.500 6.500v3" stroke="#f07d00" stroke-width="1.300"/><use href="#cube" x="2" y="2" width="12" height="12"/></svg></div>
      </div>
    </div>
    <div class="glabel l-orient">Orient</div>
  </div>

  <div class="group g-style">
    <div class="items">
      <div class="big b-vs"><svg width="34" height="32" viewBox="0 0 34 32"><path d="M2 5 13 2l6 3v12L8 20l-6-3zM2 5l6 3 11-3M8 8v12M13 2v12L2 17M13 14l6 3" fill="none" stroke="#2668c4" stroke-width="1.300"/><path d="m15 14 8-3 10 2v12l-10 4-8-4z" fill="url(#gYe)" stroke="#2668c4" stroke-width="1.300"/><path d="m15 14 8 3 10-4-10-2z" fill="#f8f4dc" stroke="#2668c4"/><path d="M23 17v12l10-4V13z" fill="#eab01c" stroke="#2668c4"/></svg><span>View<br>Styles <i class="caret in"></i></span></div>
      <div class="vsep"></div>
      <div class="style-box">
        <div class="style-head"><svg width="15" height="16"><use href="#aa"/></svg><span>Styles</span></div>
        <div class="combo"><i></i></div>
      </div>
    </div>
    <div class="glabel l-style">Style</div>
  </div>
</section>

<div class="quickbar-row">
  <div class="quickbar">
    <svg class="grip" width="7" height="24" viewBox="0 0 7 24"><path d="M1 1v22M7 1v22" stroke="#aaa" stroke-dasharray="1 4" transform="translate(-.5 0)"/><path d="M3.500 3.500v20" stroke="#aaa" stroke-dasharray="1 4"/></svg>
    <div class="cmd k1"><svg width="16" height="16"><use href="#extrude" width="16" height="16"/></svg>Extrude</div>
    <div class="cmd k2 disabled"><svg width="16" height="16" viewBox="0 0 16 16"><path d="M.5 2.500h11v12H.5z" fill="#f2f2f2" stroke="#888"/><path d="m4 12 1-4 7-8 2.500 2L7.500 10z" fill="#ccc" stroke="#777"/></svg>Edit Profile</div>
    <div class="cmd k3"><svg width="16" height="16" viewBox="0 0 16 16"><path d="m2 5 5 1 7 2-2 5-5 2-4-4z" fill="#ddd" stroke="#555"/><path d="M7.500 2v3M2 5l2 3M14 8l-2 2M7 12v2" stroke="#555"/><g fill="#fff" stroke="#d9501c" stroke-width="1.300"><circle cx="7.500" cy="1.800" r="1.200"/><circle cx="1.800" cy="5" r="1.200"/><circle cx="14" cy="8" r="1.200"/><circle cx="7" cy="13.500" r="1.200"/></g></svg>Fixed</div>
    <div class="cmd k4"><svg width="16" height="16" viewBox="0 0 16 16"><path d="m4 10-4 4v2h12l4-4v-2z" fill="#bbb" stroke="#444"/><path d="M0 14h12l4-4" fill="none" stroke="#444"/><path d="M6.500 0h3v7H12l-4 5-4-5h2.500z" fill="#f58a1c" stroke="#b9570a" stroke-width=".6"/></svg>Force</div>
    <div class="cmd k5"><svg width="16" height="16"><use href="#cubeOr" width="14" height="14"/><path d="M9.500 5v8l2-1.500 1.500 3.500 1.500-.7-1.500-3.300H15z" fill="#999" stroke="#333"/></svg>Define</div>
    <div class="cmd k6"><svg width="16" height="16" viewBox="0 0 16 16"><path d="M0 0h3v16H0z" fill="#3a62c8"/><path d="M2 0h4v5H2z" fill="#c05ad0"/><path d="M2 4h4v4H2z" fill="#27b884"/><path d="M1 8h5v4H1z" fill="#f2d32b"/><path d="M1 12h6v4H1z" fill="#e23b2c"/><path d="m5 14 1-6 6-7 3 2-6 8zM10 15l1-4 4-5v5z" fill="#ccc" stroke="#444"/><path d="m9 5 3-4 3 2-3 4z" fill="#eab83a" stroke="#444"/></svg>New Study</div>
    <div class="cmd k7"><svg width="16" height="16"><use href="#copies"/></svg><span>Save <u>A</u>s</span></div>
    <div class="cmd k8"><svg width="16" height="16" viewBox="0 0 16 16"><path d="m.5 3.500 3-3H14v11l-3 3H.5z" fill="#999" stroke="#444"/><path d="m.5 3.500 3-3H14l-3 3z" fill="#eee" stroke="#555"/><path d="M1.500 4.500h9v9h-9z" fill="#eee" stroke="#f07d00" stroke-width="1.500"/></svg>Surface Size</div>
    <div class="cmd k9"><svg width="17" height="16" viewBox="0 0 17 16"><path d="M1 1v13M16 1v13M2 7h4M12 7h4M4 5 2 7l2 2" fill="none" stroke="#1a2f9a" stroke-width="1.200"/><path d="m8 1-4 6h3l-4 8 8-9H8l3-5zM13 0 9 6h3l-4 7 6-7h-2l3-6z" fill="#ffe92e" stroke="#87801a" stroke-width=".6"/></svg>Smart Dimension</div>
    <div class="cmd k10"><svg width="15" height="16" viewBox="0 0 15 16"><path d="m1 2 4-2 3 1v7l-4 2-3-1zM1 2l3 1 4-2M4 3v7" fill="#fff" stroke="#e02b2b" stroke-width="1.200"/><path d="m1 10 4-2 2 2 5-2 2 2v3l-6 3-7-3z" fill="#3f8fd8" stroke="#265fa5"/><ellipse cx="11" cy="11" rx="3" ry="2.500" fill="#a9d3f5"/></svg>Simplify</div>
  </div>
</div>

<main class="work">
  <div class="docs">
    <div class="prompt-row">
      <svg class="prompt-ico" width="25" height="11" viewBox="0 0 25 11"><path d="M.5.500h24v10H.5z" fill="#fff" stroke="#27497e"/><path d="M0 1h25" stroke="#3762ad" stroke-width="2"/><path d="M3 6h12M18 6h4" stroke="#9db6e0" stroke-width="4" stroke-dasharray="2.500 .7"/></svg>
      <div class="prompt">Select geometry or features to edit, or click on 'Solids' commands to create 3D features.</div>
    </div>
    <div class="doc-row">
      <div class="doctab"><svg width="16" height="16" viewBox="0 0 16 16"><path d="M3.500.500h12v15h-12z" fill="#f0f0f0" stroke="#b8c4cc"/><path d="M.5 2.500H6v4h4v5H.5z" fill="url(#gBl)" stroke="#1b6fb0"/></svg><span>Wings Final Model.par</span><svg width="12" height="12" viewBox="0 0 12 12"><path d="m1 1 10 10M11 1 1 11" stroke="#fff" stroke-width="2"/></svg></div>
      <svg class="docnav" width="66" height="14" viewBox="0 0 66 14"><path d="M6.500 1.500v10l-5-5zM21.500 1.500v10l4.500-5z" fill="#fff" stroke="#000" stroke-width="1.200"/><path d="M34 5h10l-5 5z"/><path d="m53 1 10 10M63 1 53 11" stroke="#000" stroke-width="2.400"/></svg>
    </div>
    <div class="canvas">
      <div class="plane"></div>
      <svg class="model" width="480" height="160" viewBox="0 0 1440 480">
        <defs>
          <linearGradient id="body" x1="0" y1="0" x2="1" y2="0"><stop offset="0" stop-color="#9cb2b3"/><stop offset=".2" stop-color="#a6bfc0"/><stop offset="1" stop-color="#a9c4c5"/></linearGradient>
          <radialGradient id="glow"><stop offset="0" stop-color="#b8cecf"/><stop offset="1" stop-color="#b8cecf" stop-opacity="0"/></radialGradient>
          <linearGradient id="shade" x1="0" y1="0" x2="0" y2="1"><stop offset="0" stop-color="#9db2b3"/><stop offset=".8" stop-color="#829798"/><stop offset="1" stop-color="#92a7a8"/></linearGradient>
          <radialGradient id="ball" cx=".5" cy=".5" r=".55"><stop offset="0" stop-color="#4098ee"/><stop offset=".6" stop-color="#3d8ad6"/><stop offset="1" stop-color="#3373b2"/></radialGradient>
          <radialGradient id="yb" cx=".4" cy=".35" r=".7"><stop offset="0" stop-color="#fdff5a"/><stop offset="1" stop-color="#b2b000"/></radialGradient>
          <linearGradient id="redArrow" x1="0" y1="0" x2="0" y2="1"><stop offset="0" stop-color="#f00"/><stop offset="1" stop-color="#900"/></linearGradient>
        </defs>
        <path d="M150 206 180 182C230 155 280 140 345 128 400 122 470 120 550 122 620 124 680 129 720 134 900 160 1170 222 1405 276L1262 272C1000 205 740 158 560 146 420 138 290 145 228 190 200 210 184 230 180 256L160 262z" fill="#a9c0c1"/>
        <path d="M270 160C330 138 430 132 560 133 800 145 1060 195 1350 274L1262 272C1000 205 740 158 560 146 420 138 330 142 270 165z" fill="#96acad"/>
        <path d="M176 252 220 257 850 264 1262 272 1405 276 900 358 620 398C560 406 500 420 440 427H345C300 420 260 412 235 400L190 375 150 345z" fill="url(#body)"/>
        <ellipse cx="430" cy="345" rx="260" ry="60" fill="url(#glow)"/>
        <path d="M176 253 218 257C290 223 400 218 510 226 640 235 750 252 850 264 780 283 600 312 500 320 400 326 300 325 235 290L176 285z" fill="url(#shade)"/>
        <path d="M285 278C340 252 450 245 675 263 520 285 360 315 285 278z" fill="#968f90" stroke="#4db4e8" stroke-width="3"/>
        <path d="M39 250H177V298H39z" fill="#3677ba"/>
        <circle cx="108" cy="252" r="69" fill="url(#ball)"/>
        <circle cx="108" cy="296" r="69" fill="url(#ball)" stroke="#306fad" stroke-width="2"/>
        <path d="M95 276 122 228 180 182 250 150 345 128C400 122 470 120 550 122 620 124 680 129 720 134 900 160 1170 222 1405 276L900 358 620 398C560 406 500 420 440 427H345C300 420 260 412 235 400L190 375 138 336z" fill="none" stroke="#e8ae42" stroke-width="4.500"/>
        <path d="M262 265V150h12v115z" fill="#0000e0"/><path d="m268 97-14 58c8 5 20 5 28 0z" fill="#0008b8"/><path d="M268 97l-5 60" stroke="#33f" stroke-width="3"/>
        <path d="M285 270H390v14H285z" fill="#d00808"/><path d="m446 277-58-14v28z" fill="url(#redArrow)"/>
        <circle cx="267" cy="277" r="20" fill="url(#yb)"/><path d="m256 266 11 12 11-12M267 278v14" fill="none" stroke="#29dc00" stroke-width="5"/>
        <text x="250" y="76" class="axis az">Z</text><text x="466" y="290" class="axis ax">X</text>
      </svg>
      <div class="tip">Region (Sketch 1)</div>
      <div class="viewcube"><span>FRONT</span>
        <svg width="70" height="70" viewBox="0 0 70 70"><path d="M35 12v20" stroke="#9593ff" stroke-width="2"/><path d="m35 4-2.500 8h5z" fill="#8d8aff"/><path d="M38 34.500h21" stroke="#ff8e8e" stroke-width="2"/><path d="m66 34.500-8-2.500v5z" fill="#ff8585"/><circle cx="35" cy="34.500" r="3.200" fill="#f5ea1a"/></svg>
      </div>
    </div>
  </div>
  <aside class="side">
    <svg width="24" height="20" viewBox="0 0 24 20"><g fill="url(#gBl)" stroke="#1f4b86" stroke-width="1.500"><path d="M10 1h8v6h6v8H10z"/><path d="M6 6h6v5h5v6H6z"/><path d="M1 11h5v4h5v4.500H1z"/></g></svg>
    <svg width="24" height="22" viewBox="0 0 24 22"><path d="M1 1h23v20H1z" fill="#fff" stroke="#858585" stroke-width="2"/><g fill="#bbb" stroke="#858585"><circle cx="8" cy="7.500" r="2.500"/><circle cx="16.500" cy="7.500" r="2.500"/><circle cx="8" cy="15" r="2.500"/><circle cx="16.500" cy="15" r="2.500"/></g></svg>
    <svg width="24" height="18" viewBox="0 0 24 18"><path d="M4 4h19v13.500H4z" fill="#9fd0f7" stroke="#1f4b86" stroke-width="1.500"/><path d="M1 1h19v13H1z" fill="#fff" stroke="#1f4b86" stroke-width="1.500"/><path d="m4 7 4-4" stroke="#e02f2f" stroke-width="2"/><circle cx="9.500" cy="9" r="2.500" fill="none" stroke="#20994c" stroke-width="2"/><path d="M13.500 3.500H17V7h-3.500z" fill="none" stroke="#4d9de0"/></svg>
    <svg width="24" height="22" viewBox="0 0 24 22"><path d="M4 14V6M5 15 16 6M8 18h10M2 9l2-3 2 3M11 7h4v4" fill="none" stroke="#858585" stroke-width="1.500"/><path d="M1 1h5v5H1zM15 2h5v5h-5zM1 14h7v7H1zM19 15h6v5h-6z" fill="#e4e4e4" stroke="#858585" stroke-width="1.500"/></svg>
    <svg width="24" height="25" viewBox="0 0 24 25"><path d="M1 1h24v23H1z" fill="#fff" stroke="#27237c"/><circle cx="11" cy="10.500" r="6" fill="#26bce8" stroke="#122a91" stroke-width="4" stroke-dasharray="3 1.700"/><circle cx="11" cy="10.500" r="5.500" fill="#26bce8"/><circle cx="11" cy="10.500" r="2.500" fill="#fff" stroke="#122a91" stroke-width="2"/><path d="M2 21h17M3 19v4M19 19v4M21 2v16M19 3h4M19 18h4M10 17v7M19 10h6" stroke="#101080" stroke-width="1.300"/></svg>
    <svg width="24" height="22" viewBox="0 0 24 22"><path d="M1 1h7v5h5v6H1z" fill="url(#gBl)" stroke="#1f4b86" stroke-width="1.500"/><path d="M6 12v9M6 17h8" stroke="#1f4b86" stroke-width="1.500"/><path d="M14 13h7v7h-7z" fill="#7cc0f4" stroke="#1f4b86" stroke-width="1.500"/><path d="M16.500 15.500h2v2h-2z" fill="#1f4b86"/></svg>
    <span class="pf">PathFinder</span>
  </aside>
</main>
</body>
</html>
```

FILE: styles.css
```css
* { box-sizing: border-box; }
body { margin: 0; width: 1917px; height: 991px; overflow: hidden; background: #fff; color: #000; font-family: "Noto Sans", "Open Sans", sans-serif; font-size: 12px; display: flex; flex-direction: column; white-space: nowrap; }
svg { display: block; flex: none; overflow: visible; }
.defs { position: absolute; }

/* carets */
.caret { display: block; flex: none; width: 7px; height: 4px; background: #000; clip-path: polygon(0 0, 100% 0, 50% 100%); }
.caret.light { background: #fff; }
.caret.in { display: inline-block; margin-left: 1px; vertical-align: 3px; }
.b-circle .caret.in { margin-left: 3px; }
.caret.under { margin: 10px 4px 0 0; }
.gap1 { margin-left: 1px; }
.gap7 { margin-left: 7px; }
.gap8 { margin-left: 8px; }

/* title bar */
.titlebar { flex: none; height: 70px; background: linear-gradient(90deg, #006487 0, #006487 960px, #27809f 1400px, #519db9 1917px); border-bottom: 1px solid #c8dde4; color: #fff; }
.title-row { display: flex; height: 36px; }
.logo { width: 30px; height: 30px; margin: 2px 0 0 8px; border: 1px solid #fff; background: #2a47a6; font: bold 14px/34px "Open Sans", sans-serif; padding-left: 3px; letter-spacing: -.5px; }
.quick { display: flex; align-items: center; width: 724px; height: 36px; }
.q-new { margin-left: 30px; }
.c-new { margin-left: 8px; }
.q-open { margin-left: 8px; }
.q-key { margin-left: 12px; }
.q-save { margin-left: 10px; }
.q-saveas { margin-left: 9px; }
.c-saveas { margin-left: 8px; }
.q-list { margin-left: 8px; }
.q-style { margin-left: 9px; }
.c-style { margin-left: 1px; }
.q-door { margin-left: 11px; }
.q-undo { margin-left: 10px; }
.c-undo { margin-left: 8px; }
.q-redo { margin-left: 7px; }
.c-redo { margin-left: 9px; }
.q-multi { margin-left: 8px; }
.overflow { margin: -2px 0 0 8px; border-top: 2px solid #fff; padding-top: 2px; }
.caret.wide { width: 8px; }
.title { width: 988px; font-size: 15.500px; font-weight: 300; line-height: 40px; letter-spacing: -.06px; }
.brand { width: 66px; font: bold 11px/39px "Open Sans", sans-serif; -webkit-text-stroke: .4px #fff; letter-spacing: -.1px; }
.sys { margin-top: 13px; }
.s-min { margin-left: 1px; }
.s-res { margin-left: 26px; }
.s-x { margin-left: 26px; }

.tab-row { display: flex; height: 33px; font-size: 15.500px; font-weight: 300; line-height: 42px; letter-spacing: -.1px; }
.tab { flex: none; text-align: center; }
.t-file { width: 70px; line-height: 38px; }
.t-home { width: 76px; margin-left: 10px; height: 31px; color: #ffc34d; border-bottom: 1px solid #ffc34d; }
.t-surf { width: 104px; }
.t-pmi { width: 60px; }
.t-sim { width: 114px; margin-left: 1px; }
.t-gen { width: 160px; }
.t-3d { width: 96px; }
.t-insp { width: 84px; }
.t-tools { width: 70px; }
.t-view { width: 70px; }
.t-data { width: 164px; }
.search { display: flex; justify-content: space-between; width: 166px; height: 25px; margin: 5px 0 0 490px; border: 1px solid #aaa; background: #fff; color: #000; padding: 4px 5px 0 4px; font: 13px/20px "Open Sans", sans-serif; letter-spacing: -.15px; }
.face { margin-top: 9px; }
.f1 { margin-left: 54px; }
.f2 { margin-left: 9px; }
.help { width: 10px; margin-left: 13px; font: bold 15px/35px "Open Sans", sans-serif; }
.mini { margin-top: 12px; }
.m1 { margin-left: 12px; }
.m2 { margin-left: 11px; }
.m3 { margin-left: 11px; }

/* ribbon */
.ribbon { flex: none; display: flex; height: 106px; border-bottom: 1px solid #d4d4d4; }
.group { position: relative; flex: none; display: flex; flex-direction: column; height: 95px; background: linear-gradient(#dcdcdc, #dcdcdc) right 8px / 1px 87px no-repeat; }
.items { display: flex; height: 81px; padding-top: 6px; }
.glabel { text-align: center; line-height: 16px; font-size: 12.500px; letter-spacing: -.1px; }
.g-clip { width: 109px; }
.g-select { width: 93px; }
.g-planes { width: 49px; }
.g-sketch { width: 319px; }
.g-solids { width: 367px; }
.g-pattern { width: 121px; }
.g-modify { width: 234px; }
.g-dim { width: 204px; }
.g-orient { width: 196px; }
.g-style { width: 216px; }
.l-clip { padding-left: 6px; }
.l-select { padding-left: 4px; }
.l-planes { padding-left: 3px; }
.l-sketch { padding-left: 2px; }
.l-solids { padding-left: 4px; }
.l-pattern { padding-left: 2px; }
.l-modify { padding-left: 2px; }
.l-dim { padding-left: 3px; }
.l-orient { padding-left: 2px; }
.l-style { padding-left: 4px; }

.big { flex: none; display: flex; flex-direction: column; align-items: center; height: 75px; padding-top: 3px; line-height: 14px; text-align: center; }
.big > span { margin-top: 11px; font-size: 12.500px; letter-spacing: -.2px; }
.big > svg { margin: 1px 0 -1px; }
.disabled { color: #aaa; }
.active { background: #cfe6ea; outline: 1px solid #c2d8f2; outline-offset: -1px; color: #444; }
.b-paste { width: 50px; margin-left: 12px; }
.b-select { width: 53px; margin-left: 9px; }
.b-line { width: 52px; margin-left: 9px; }
.b-circle { width: 82px; margin-left: 3px; }
.b-sk { width: 61px; }
.b-3d { width: 61px; }
.b-ext { width: 54px; margin-left: 7px; }
.b-rev { width: 54px; }
.b-hole { width: 52px; }
.b-round { width: 53px; }
.b-draft { width: 54px; }
.b-thin { width: 52px; }
.b-pat { width: 54px; margin-left: 8px; }
.b-mir { width: 53px; }
.b-move { width: 54px; margin-left: 8px; }
.b-del { width: 53px; }
.b-smart { width: 66px; margin-left: 9px; }
.b-zoom { width: 54px; margin-left: 8px; }
.b-fit { width: 52px; }
.b-vs { width: 56px; margin-left: 8px; }

.col { flex: none; display: flex; flex-direction: column; margin-left: 6px; width: 32px; }
.row { display: flex; align-items: center; height: 25px; }
.c-select { margin-left: 5px; width: 16px; }
.c-planes { margin-left: 14px; }
.c-shapes { margin-left: 11px; width: 35px; }
.c-solids { margin-left: 5px; width: 30px; }
.c-modify { margin-left: 4px; width: 110px; }
.c-modify span { margin-left: 3px; font-size: 12.500px; letter-spacing: 0; line-height: 22px; padding-top: 2px; }
.c-d1 { margin-left: 5px; width: 35px; }
.c-d2 { margin-left: 0; width: 25px; }
.c-d2 .row { padding-left: 4px; width: 25px; }
.c-d3 { margin-left: 4px; width: 24px; }
.c-d4 { margin-left: 9px; width: 16px; }
.c-o1 { margin-left: 5px; width: 16px; }
.c-o2 { margin-left: 10px; width: 16px; }
.c-o3 { margin-left: 8px; width: 16px; }
.hl { background: #cfe6ea; outline: 1px solid #c2d8f2; outline-offset: -1px; }
.vsep { flex: none; width: 1px; height: 75px; background: #dcdcdc; }
.ico-a { font: bold 10px "Open Sans", sans-serif; fill: #f07d00; }
.ico-b { font: italic bold 15px "Liberation Serif", serif; fill: #f07d00; }
.ico-c { font: bold 15px "Open Sans", sans-serif; fill: #f07d00; }
.ico-d { font: bold 10px "Open Sans", sans-serif; fill: #f07d00; }
.style-box { margin-left: 5px; }
.style-head { display: flex; gap: 3px; align-items: center; height: 25px; padding-left: 5px; font-size: 12.500px; letter-spacing: -.2px; }
.style-head span { padding-top: 2px; }
.combo { width: 140px; height: 25px; border: 1px solid #a5a5a5; padding: 8px 4px; display: flex; justify-content: flex-end; }
.combo i { width: 11px; height: 6px; background: #777; clip-path: polygon(0 0, 100% 0, 50% 100%); }

/* custom command bar */
.quickbar-row { flex: none; height: 31px; padding-left: 666px; }
.quickbar { display: flex; align-items: center; width: 823px; height: 31px; border: solid #dedede; border-width: 1px 1px 0; padding-top: 1px; }
.grip { margin: 0 6px 0 3px; }
.cmd { flex: none; display: flex; align-items: center; gap: 3px; font-size: 12.500px; letter-spacing: -.2px; }
.cmd u { text-underline-offset: 2px; }
.k1 { width: 73px; }
.k2 { width: 90px; }
.k3 { width: 58px; }
.k4 { width: 60px; }
.k5 { width: 65px; }
.k6 { width: 90px; }
.k7 { width: 74px; }
.k8 { width: 97px; }
.k9 { width: 128px; gap: 2px; }

/* work area */
.work { flex: 1; display: flex; min-height: 0; }
.docs { width: 1884px; display: flex; flex-direction: column; }
.prompt-row { flex: none; display: flex; height: 32px; border-bottom: 3px solid #d3d3d3; padding-left: 6px; }
.prompt-ico { margin-top: 10px; }
.prompt { width: 1834px; height: 27px; margin-left: 12px; border-top: 1px solid #a0a0a0; border-left: 1px solid #a0a0a0; padding-left: 1px; font-size: 16px; font-weight: 350; line-height: 25px; letter-spacing: .39px; }
.doc-row { flex: none; display: flex; justify-content: space-between; height: 35px; padding: 3px 3px 0 2px; border-bottom: 1px solid #0d5f80; }
.doctab { display: flex; align-items: center; width: 222px; height: 31px; background: #006487; color: #fff; padding: 0 4px 0 19px; font: 14.500px "Open Sans", sans-serif; border-right: 1px solid #bbb; border-left: 1px solid #9bb; }
.doctab span { width: 171px; margin: 0 0 0 2px; letter-spacing: -.08px; }
.doctab svg + span + svg { margin-top: -3px; }
.docnav { margin: 6px 0 0; }
.canvas { position: relative; flex: 1; background: #fafcfb; }
.plane { position: absolute; left: 407px; top: 22px; width: 1094px; height: 657px; background: #dffbfb; border: solid #f2b84e; border-width: 1px 2px 2px; }
.model { position: absolute; left: 740px; top: 286px; }
.axis { font: 42px "Liberation Sans", sans-serif; }
.az { fill: #00f; }
.ax { fill: #f01818; }
.tip { position: absolute; left: 1315px; top: 552px; width: 114px; height: 20px; border: 1px solid #000; background: #fff; font: 13px/20px "Liberation Sans", sans-serif; text-align: center; }
.viewcube { position: absolute; left: 1769px; top: 606px; width: 70px; height: 70px; border: 1px solid #bcbcbc; }
.viewcube span { position: absolute; left: 8px; top: 25px; font: 16px/20px "Liberation Sans", sans-serif; color: #666; letter-spacing: -.5px; }
.viewcube svg { position: absolute; left: -1px; top: 0; }
.side { width: 33px; background: #fafcfb; padding: 12px 0 0 9px; display: flex; flex-direction: column; overflow: hidden; }
.side svg { margin-left: -1px; }
.side svg + svg { margin-top: 23px; }
.side svg:nth-child(5) { margin-top: 19px; }
.side svg:nth-child(6) { margin-top: 20px; }
.pf { writing-mode: vertical-rl; width: 18px; font: 14px/18px "Open Sans", sans-serif; margin: 4px 0 0 4px; }
```
